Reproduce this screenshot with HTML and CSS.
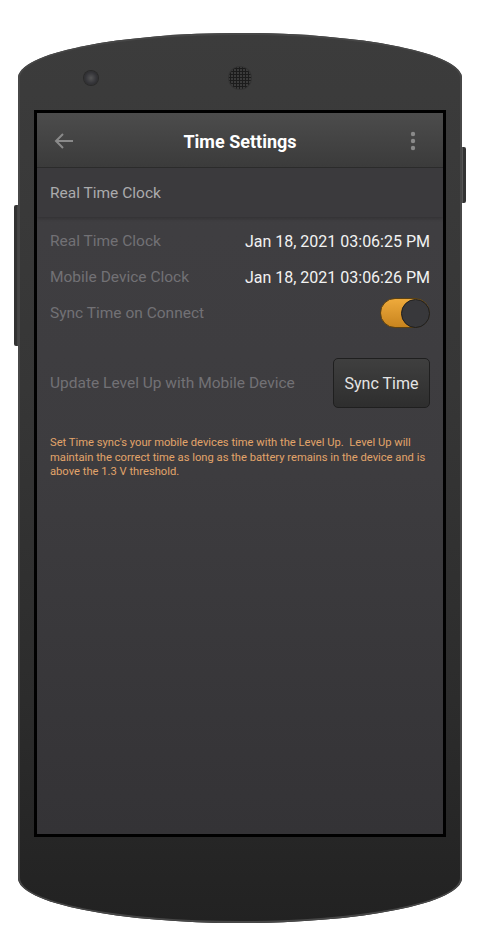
FILE: index.html
```html
<!DOCTYPE html>
<html>
<head>
<meta charset="utf-8">
<link rel="stylesheet" href="styles.css">
</head>
<body>
<div class="phone">
  <div class="btn-right"></div>
  <div class="btn-left"></div>
  <div class="topbar">
    <div class="camera"></div>
    <div class="speaker"></div>
  </div>
  <div class="screen">
    <div class="appbar">
      <svg class="back" width="20" height="18" viewBox="0 0 20 18"><path d="M19 9H2M9 2L2 9l7 7" fill="none" stroke="#8a8a8a" stroke-width="2"/></svg>
      <div class="title">Time Settings</div>
      <svg class="kebab" width="6" height="20" viewBox="0 0 6 20"><circle cx="3" cy="3" r="2.2" fill="#8a8a8a"/><circle cx="3" cy="10" r="2.2" fill="#8a8a8a"/><circle cx="3" cy="17" r="2.2" fill="#8a8a8a"/></svg>
    </div>
    <div class="section">Real Time Clock</div>
    <div class="content">
      <div class="row"><span class="label">Real Time Clock</span><span class="value">Jan 18, 2021 03:06:25 PM</span></div>
      <div class="row"><span class="label">Mobile Device Clock</span><span class="value">Jan 18, 2021 03:06:26 PM</span></div>
      <div class="row"><span class="label">Sync Time on Connect</span><span class="toggle"><span class="thumb"></span></span></div>
      <div class="sync-row"><span class="label">Update Level Up with Mobile Device</span><button class="sync-btn">Sync Time</button></div>
      <p class="note">Set Time sync's your mobile devices time with the Level Up.&nbsp; Level Up will maintain the correct time as long as the battery remains in the device and is above the 1.3 V threshold.</p>
    </div>
  </div>
</div>
</body>
</html>
```
FILE: styles.css
```css
html, body {
  margin: 0;
  padding: 0;
  background: #ffffff;
}
body {
  font-family: Roboto, "Liberation Sans", sans-serif;
}
.phone {
  position: relative;
  box-sizing: border-box;
  width: 444px;
  height: 890px;
  margin: 33px 0 0 18px;
  padding: 0 16px;
  border-radius: 222px / 45px;
  background: linear-gradient(#3c3c3c 0%, #363636 40%, #2c2c2c 75%, #222222 100%);
  box-shadow: inset 0 0 0 2px #474747;
}
.btn-right {
  position: absolute;
  left: 444px;
  top: 114px;
  width: 4px;
  height: 56px;
  background: #333;
  border-radius: 0 2px 2px 0;
  box-shadow: inset 1px 0 0 #555;
}
.btn-left {
  position: absolute;
  left: -4px;
  top: 172px;
  width: 4px;
  height: 141px;
  background: #333;
  border-radius: 2px 0 0 2px;
  box-shadow: inset -1px 0 0 #444;
}
.topbar {
  box-sizing: border-box;
  height: 77px;
  padding: 13px 0 0 50px;
  display: flex;
  align-items: center;
}
.camera {
  width: 14px;
  height: 14px;
  border-radius: 50%;
  background: radial-gradient(circle at 50% 50%, #555 0, #3a3a3e 45%, #202022 100%);
  box-shadow: 0 0 0 1px #2a2a2a;
}
.speaker {
  width: 22px;
  height: 22px;
  margin-left: 131px;
  border-radius: 50%;
  background: radial-gradient(circle, #1c1c1c 1px, transparent 1.3px) 0 0 / 3px 3px, #3b3b3b;
  box-shadow: 0 0 0 1px #333;
}
.screen {
  box-sizing: border-box;
  width: 412px;
  height: 727px;
  border: 3px solid #000;
  background: linear-gradient(#403f42 0%, #3d3c3f 50%, #343336 100%);
  display: flex;
  flex-direction: column;
}
.appbar {
  position: relative;
  height: 54px;
  flex: none;
  display: flex;
  align-items: center;
  justify-content: space-between;
  padding: 0 27px 0 17px;
  background: linear-gradient(#4c4c4c, #3b3b3b);
  box-shadow: 0 1px 0 #2b2b2b;
}
.back {
  display: block;
  margin-top: 2px;
}
.kebab {
  display: block;
  margin-top: 2px;
}
.title {
  position: absolute;
  left: 0;
  right: 0;
  top: 2px;
  bottom: 0;
  display: flex;
  align-items: center;
  justify-content: center;
  font-weight: bold;
  font-size: 18px;
  color: #ffffff;
  pointer-events: none;
}
.section {
  flex: none;
  margin-top: 1px;
  height: 49px;
  display: flex;
  align-items: center;
  padding-left: 13px;
  font-size: 15.5px;
  color: #ababad;
  background: #3b3a3d;
  box-shadow: 0 2px 3px rgba(0, 0, 0, 0.18);
}
.content {
  padding: 6px 13px 0;
}
.row {
  height: 36px;
  display: flex;
  align-items: center;
  justify-content: space-between;
}
.label {
  font-size: 15.5px;
  color: #727175;
}
.value {
  font-size: 16px;
  color: #f2f2f2;
}
.toggle {
  position: relative;
  box-sizing: border-box;
  width: 50px;
  height: 30px;
  border-radius: 15px;
  background: linear-gradient(#eeaa3c, #c8841e);
  border: 1px solid #5e4210;
  display: flex;
  justify-content: flex-end;
  align-items: center;
}
.thumb {
  box-sizing: border-box;
  width: 29px;
  height: 29px;
  margin-right: -1px;
  border-radius: 50%;
  background: #38383b;
  border: 1px solid #1e1e1e;
}
.sync-row {
  margin-top: 27px;
  height: 50px;
  display: flex;
  align-items: center;
  justify-content: space-between;
}
.sync-btn {
  box-sizing: border-box;
  width: 97px;
  height: 50px;
  border-radius: 5px;
  border: 1px solid #1f1f1f;
  background: linear-gradient(#3f3f3f, #2e2e2e);
  color: #e4e4e4;
  font-family: Roboto, "Liberation Sans", sans-serif;
  font-size: 16px;
  padding: 0;
}
.note {
  margin: 28px 0 0;
  font-size: 11.2px;
  line-height: 14.5px;
  color: #e2a46a;
}
```
